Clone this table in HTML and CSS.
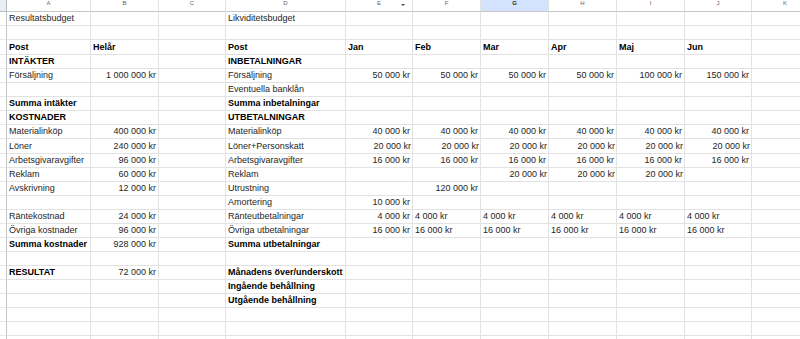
FILE: index.html
```html
<!DOCTYPE html>
<html lang="sv">
<head>
<meta charset="utf-8">
<title>Budget</title>
<link rel="stylesheet" href="styles.css">
</head>
<body>
<div class="sheet">
  <div class="row hd">
    <div class="c rh corner"></div><div class="c">A</div><div class="c">B</div><div class="c">C</div><div class="c">D</div><div class="c dd">E</div><div class="c">F</div><div class="c sel">G</div><div class="c">H</div><div class="c">I</div><div class="c">J</div><div class="c">K</div>
  </div>
  <div class="row">
    <div class="c rh"></div><div class="c">Resultatsbudget</div><div class="c"></div><div class="c"></div><div class="c">Likviditetsbudget</div><div class="c"></div><div class="c"></div><div class="c"></div><div class="c"></div><div class="c"></div><div class="c"></div><div class="c"></div>
  </div>
  <div class="row">
    <div class="c rh"></div><div class="c"></div><div class="c"></div><div class="c"></div><div class="c"></div><div class="c"></div><div class="c"></div><div class="c"></div><div class="c"></div><div class="c"></div><div class="c"></div><div class="c"></div>
  </div>
  <div class="row">
    <div class="c rh"></div><div class="c b">Post</div><div class="c b">Helår</div><div class="c"></div><div class="c b">Post</div><div class="c b">Jan</div><div class="c b">Feb</div><div class="c b">Mar</div><div class="c b">Apr</div><div class="c b">Maj</div><div class="c b">Jun</div><div class="c"></div>
  </div>
  <div class="row">
    <div class="c rh"></div><div class="c b">INTÄKTER</div><div class="c"></div><div class="c"></div><div class="c b">INBETALNINGAR</div><div class="c"></div><div class="c"></div><div class="c"></div><div class="c"></div><div class="c"></div><div class="c"></div><div class="c"></div>
  </div>
  <div class="row">
    <div class="c rh"></div><div class="c">Försäljning</div><div class="c r">1 000 000 kr</div><div class="c"></div><div class="c">Försäljning</div><div class="c r">50 000 kr</div><div class="c r">50 000 kr</div><div class="c r">50 000 kr</div><div class="c r">50 000 kr</div><div class="c r">100 000 kr</div><div class="c r">150 000 kr</div><div class="c"></div>
  </div>
  <div class="row">
    <div class="c rh"></div><div class="c"></div><div class="c"></div><div class="c"></div><div class="c">Eventuella banklån</div><div class="c"></div><div class="c"></div><div class="c"></div><div class="c"></div><div class="c"></div><div class="c"></div><div class="c"></div>
  </div>
  <div class="row">
    <div class="c rh"></div><div class="c b">Summa intäkter</div><div class="c"></div><div class="c"></div><div class="c b">Summa inbetalningar</div><div class="c"></div><div class="c"></div><div class="c"></div><div class="c"></div><div class="c"></div><div class="c"></div><div class="c"></div>
  </div>
  <div class="row">
    <div class="c rh"></div><div class="c b">KOSTNADER</div><div class="c"></div><div class="c"></div><div class="c b">UTBETALNINGAR</div><div class="c"></div><div class="c"></div><div class="c"></div><div class="c"></div><div class="c"></div><div class="c"></div><div class="c"></div>
  </div>
  <div class="row">
    <div class="c rh"></div><div class="c">Materialinköp</div><div class="c r">400 000 kr</div><div class="c"></div><div class="c">Materialinköp</div><div class="c r">40 000 kr</div><div class="c r">40 000 kr</div><div class="c r">40 000 kr</div><div class="c r">40 000 kr</div><div class="c r">40 000 kr</div><div class="c r">40 000 kr</div><div class="c"></div>
  </div>
  <div class="row">
    <div class="c rh"></div><div class="c">Löner</div><div class="c r">240 000 kr</div><div class="c"></div><div class="c">Löner+Personskatt</div><div class="c r t">20 000 kr</div><div class="c r t">20 000 kr</div><div class="c r t">20 000 kr</div><div class="c r t">20 000 kr</div><div class="c r t">20 000 kr</div><div class="c r t">20 000 kr</div><div class="c"></div>
  </div>
  <div class="row">
    <div class="c rh"></div><div class="c">Arbetsgivaravgifter</div><div class="c r">96 000 kr</div><div class="c"></div><div class="c">Arbetsgivaravgifter</div><div class="c r">16 000 kr</div><div class="c r">16 000 kr</div><div class="c r">16 000 kr</div><div class="c r">16 000 kr</div><div class="c r">16 000 kr</div><div class="c r">16 000 kr</div><div class="c"></div>
  </div>
  <div class="row">
    <div class="c rh"></div><div class="c">Reklam</div><div class="c r">60 000 kr</div><div class="c"></div><div class="c">Reklam</div><div class="c"></div><div class="c"></div><div class="c r t">20 000 kr</div><div class="c r t">20 000 kr</div><div class="c r t">20 000 kr</div><div class="c"></div><div class="c"></div>
  </div>
  <div class="row">
    <div class="c rh"></div><div class="c">Avskrivning</div><div class="c r">12 000 kr</div><div class="c"></div><div class="c">Utrustning</div><div class="c"></div><div class="c r">120 000 kr</div><div class="c"></div><div class="c"></div><div class="c"></div><div class="c"></div><div class="c"></div>
  </div>
  <div class="row">
    <div class="c rh"></div><div class="c"></div><div class="c"></div><div class="c"></div><div class="c">Amortering</div><div class="c r">10 000 kr</div><div class="c"></div><div class="c"></div><div class="c"></div><div class="c"></div><div class="c"></div><div class="c"></div>
  </div>
  <div class="row">
    <div class="c rh"></div><div class="c">Räntekostnad</div><div class="c r">24 000 kr</div><div class="c"></div><div class="c">Ränteutbetalningar</div><div class="c r">4 000 kr</div><div class="c">4 000 kr</div><div class="c">4 000 kr</div><div class="c">4 000 kr</div><div class="c">4 000 kr</div><div class="c">4 000 kr</div><div class="c"></div>
  </div>
  <div class="row">
    <div class="c rh"></div><div class="c">Övriga kostnader</div><div class="c r">96 000 kr</div><div class="c"></div><div class="c">Övriga utbetalningar</div><div class="c r">16 000 kr</div><div class="c">16 000 kr</div><div class="c">16 000 kr</div><div class="c">16 000 kr</div><div class="c">16 000 kr</div><div class="c">16 000 kr</div><div class="c"></div>
  </div>
  <div class="row">
    <div class="c rh"></div><div class="c b">Summa kostnader</div><div class="c r">928 000 kr</div><div class="c"></div><div class="c b">Summa utbetalningar</div><div class="c"></div><div class="c"></div><div class="c"></div><div class="c"></div><div class="c"></div><div class="c"></div><div class="c"></div>
  </div>
  <div class="row">
    <div class="c rh"></div><div class="c"></div><div class="c"></div><div class="c"></div><div class="c"></div><div class="c"></div><div class="c"></div><div class="c"></div><div class="c"></div><div class="c"></div><div class="c"></div><div class="c"></div>
  </div>
  <div class="row">
    <div class="c rh"></div><div class="c b">RESULTAT</div><div class="c r">72 000 kr</div><div class="c"></div><div class="c b">Månadens över/underskott</div><div class="c"></div><div class="c"></div><div class="c"></div><div class="c"></div><div class="c"></div><div class="c"></div><div class="c"></div>
  </div>
  <div class="row">
    <div class="c rh"></div><div class="c"></div><div class="c"></div><div class="c"></div><div class="c b">Ingående behållning</div><div class="c"></div><div class="c"></div><div class="c"></div><div class="c"></div><div class="c"></div><div class="c"></div><div class="c"></div>
  </div>
  <div class="row">
    <div class="c rh"></div><div class="c"></div><div class="c"></div><div class="c"></div><div class="c b">Utgående behållning</div><div class="c"></div><div class="c"></div><div class="c"></div><div class="c"></div><div class="c"></div><div class="c"></div><div class="c"></div>
  </div>
  <div class="row">
    <div class="c rh"></div><div class="c"></div><div class="c"></div><div class="c"></div><div class="c"></div><div class="c"></div><div class="c"></div><div class="c"></div><div class="c"></div><div class="c"></div><div class="c"></div><div class="c"></div>
  </div>
  <div class="row">
    <div class="c rh"></div><div class="c"></div><div class="c"></div><div class="c"></div><div class="c"></div><div class="c"></div><div class="c"></div><div class="c"></div><div class="c"></div><div class="c"></div><div class="c"></div><div class="c"></div>
  </div>
  <div class="row">
    <div class="c rh"></div><div class="c"></div><div class="c"></div><div class="c"></div><div class="c"></div><div class="c"></div><div class="c"></div><div class="c"></div><div class="c"></div><div class="c"></div><div class="c"></div><div class="c"></div>
  </div>
</div>
</body>
</html>
```
FILE: styles.css
```css
html, body {
  margin: 0;
  padding: 0;
  background: #ffffff;
  overflow: hidden;
}

.sheet {
  display: grid;
  grid-template-columns: 7px 84px 68px 67px 120px 67px 68px 68px 68px 68px 67px 67px;
  grid-template-rows: 12px 14px 14px 15px 14px 14px 14px 14px 14px 14px 15px;
  grid-auto-rows: 14px;
  width: 819px;
  font-family: "Liberation Sans", Arial, sans-serif;
  font-size: 9px;
  color: #262626;
}

.row {
  display: contents;
}

.c {
  box-sizing: border-box;
  min-width: 0;
  display: flex;
  align-items: flex-end;
  padding: 0 2px 1px 2px;
  line-height: 11px;
  white-space: nowrap;
  border-right: 1px solid #e2e2e2;
  border-bottom: 1px solid #e2e2e2;
}

.r {
  justify-content: flex-end;
}

.t {
  padding-right: 1px;
}

.b {
  font-weight: bold;
  color: #000000;
}

.rh {
  padding: 0;
  border-right-color: #c4c7c5;
  border-bottom-color: #e6e6e6;
}

.hd .c {
  justify-content: center;
  align-items: flex-start;
  padding: 0;
  font-size: 6px;
  line-height: 7px;
  color: #5f6368;
  border-bottom-color: #c4c7c5;
}

.hd .corner {
  background: #eceff1;
  border-right-color: #b9bcbf;
  border-bottom-color: #b9bcbf;
}

.hd .sel {
  background: #d3e3fd;
  color: #1f1f1f;
  font-weight: bold;
}

.dd {
  position: relative;
}

.dd::after {
  content: "";
  position: absolute;
  right: 7px;
  top: 4px;
  border-left: 2px solid transparent;
  border-right: 2px solid transparent;
  border-top: 2px solid #444746;
}
```
